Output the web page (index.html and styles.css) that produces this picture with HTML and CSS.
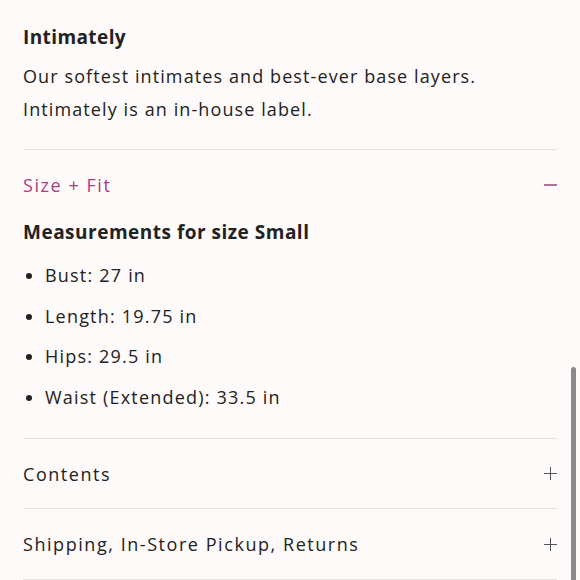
FILE: index.html
```html
<!DOCTYPE html>
<html>
<head>
<meta charset="utf-8">
<link rel="stylesheet" href="styles.css">
</head>
<body>
<main class="page">
  <section class="brand">
    <h3 class="brand-title">Intimately</h3>
    <p class="brand-text">Our softest intimates and best-ever base layers.</p>
    <p class="brand-text">Intimately is an in-house label.</p>
  </section>
  <section class="acc acc-open">
    <div class="acc-head">
      <span class="acc-label acc-label-active">Size + Fit</span>
      <span class="icon icon-minus"></span>
    </div>
    <div class="acc-body">
      <h4 class="meas-title">Measurements for size Small</h4>
      <ul class="meas-list">
        <li>Bust: 27 in</li>
        <li>Length: 19.75 in</li>
        <li>Hips: 29.5 in</li>
        <li>Waist (Extended): 33.5 in</li>
      </ul>
    </div>
  </section>
  <section class="acc">
    <div class="acc-head">
      <span class="acc-label">Contents</span>
      <span class="icon icon-plus"></span>
    </div>
  </section>
  <section class="acc acc-last">
    <div class="acc-head acc-head-tall">
      <span class="acc-label">Shipping, In-Store Pickup, Returns</span>
      <span class="icon icon-plus"></span>
    </div>
  </section>
</main>
<div class="scrollbar"></div>
</body>
</html>
```
FILE: styles.css
```css
html, body {
  margin: 0;
  padding: 0;
  background: #fdfaf9;
}
body {
  font-family: "Open Sans", "Liberation Sans", sans-serif;
  color: #222;
  overflow: hidden;
}
.page {
  padding: 0 23px;
}
.brand {
  padding-top: 24px;
  padding-bottom: 23px;
}
.brand-title {
  margin: 0 0 9px;
  font-size: 19px;
  font-weight: 700;
  line-height: 27px;
  letter-spacing: 0.4px;
}
.brand-text {
  margin: 0;
  font-size: 18px;
  line-height: 33px;
  letter-spacing: 1.1px;
}
.acc {
  border-top: 1px solid #e6e2e1;
}
.acc-last {
  border-bottom: 1px solid #e6e2e1;
}
.acc-head {
  display: flex;
  align-items: center;
  justify-content: space-between;
  height: 69px;
}
.acc-head-tall {
  height: 70px;
}
.acc-label {
  font-size: 18px;
  letter-spacing: 1.55px;
}
.acc-label-active {
  color: #a8407f;
}
.icon {
  position: relative;
  width: 13px;
  height: 13px;
}
.icon-minus::before,
.icon-plus::before,
.icon-plus::after {
  content: "";
  position: absolute;
  background: #555;
}
.icon-minus::before {
  left: 0;
  right: 0;
  top: 6px;
  height: 1.5px;
  background: #b86d97;
}
.icon-plus::before {
  left: 0;
  right: 0;
  top: 6px;
  height: 1px;
}
.icon-plus::after {
  top: 0;
  bottom: 0;
  left: 6px;
  width: 1px;
}
.acc-body {
  padding-bottom: 21px;
}
.meas-title {
  margin: 0 0 10px;
  font-size: 19px;
  font-weight: 700;
  line-height: 26px;
  letter-spacing: 0.5px;
}
.meas-list {
  margin: 0;
  padding: 0;
  list-style: none;
}
.meas-list li {
  position: relative;
  padding-left: 22px;
  font-size: 18px;
  line-height: 40.5px;
  letter-spacing: 1.2px;
}
.meas-list li::before {
  content: "";
  position: absolute;
  left: 3px;
  top: 18px;
  width: 6px;
  height: 6px;
  border-radius: 50%;
  background: #222;
}
.scrollbar {
  position: fixed;
  right: 4px;
  top: 367px;
  width: 5px;
  bottom: 0;
  background: #8a8a8a;
  border-radius: 3px 3px 0 0;
}
```
